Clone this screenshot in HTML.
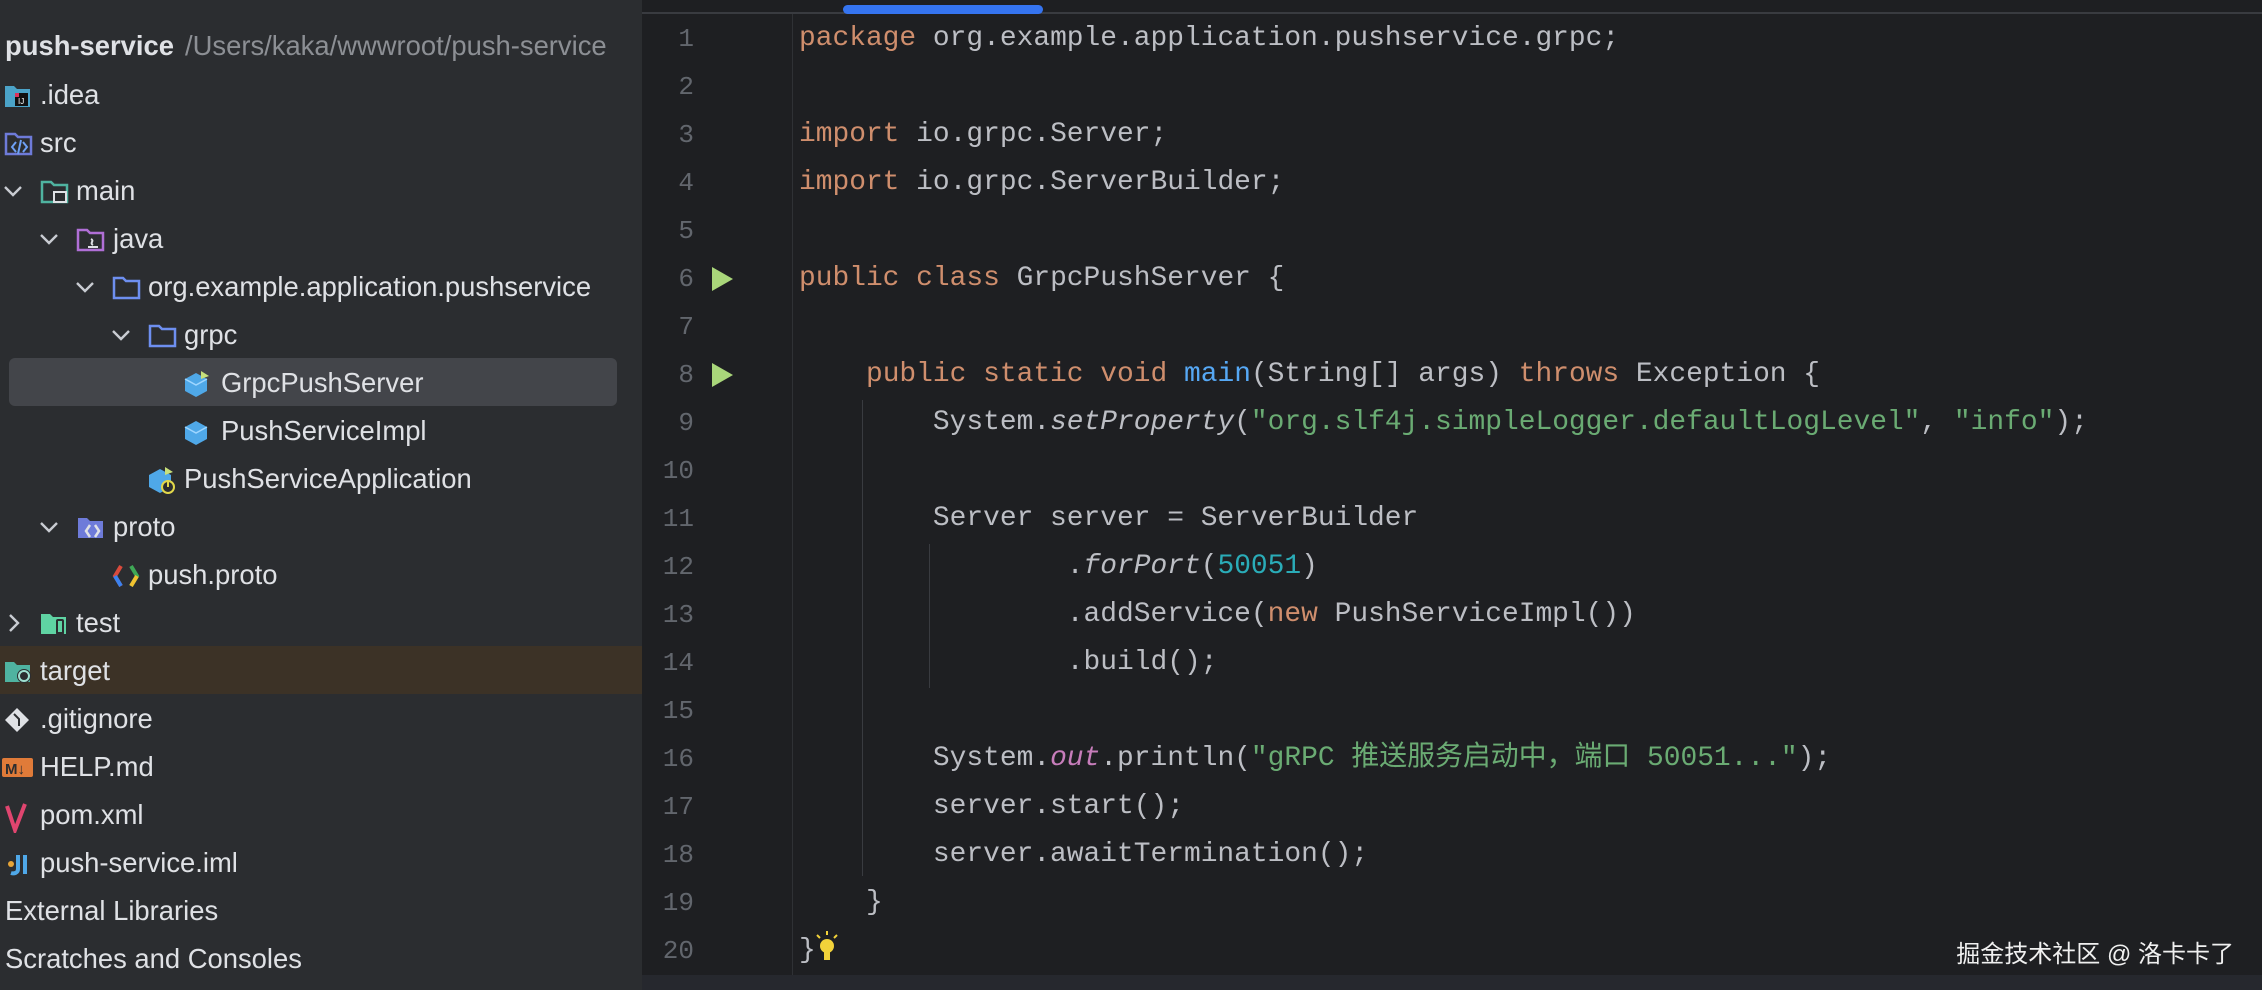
<!DOCTYPE html>
<html><head><meta charset="utf-8"><style>
*{margin:0;padding:0;box-sizing:border-box}
body{width:2262px;height:990px;overflow:hidden;background:#1e1f22;position:relative;font-family:"Liberation Sans","Noto Sans CJK SC",sans-serif}
#side{position:absolute;left:0;top:0;width:642px;height:990px;background:#2b2d30}
.row{position:absolute;left:0;height:48px;width:642px;color:#dfe1e5;font-size:27.4px;line-height:48px;white-space:nowrap}
.row .t{position:absolute;top:0}
.row svg{position:absolute;top:12px}
.row svg.cv{top:16px}
#ed{position:absolute;left:642px;top:0;right:0;bottom:0;background:#1e1f22}
.ln{position:absolute;left:642px;width:52px;text-align:right;color:#62666d;font-family:"Liberation Mono",monospace;font-size:26px;height:48px;line-height:48px}
.cl{position:absolute;left:799px;height:48px;line-height:48px;font-family:"Liberation Mono","Noto Sans CJK SC",monospace;font-size:27.9px;color:#bcbec4;white-space:pre}
.k{color:#cf8e6d}.s{color:#6aab73}.n{color:#2aacb8}.f{color:#56a8f5}.i{font-style:italic}.o{color:#c77dbb;font-style:italic}
.guide{position:absolute;width:1px;background:#393b40}
.run{position:absolute;left:712px;width:0;height:0;border-top:12px solid transparent;border-bottom:12px solid transparent;border-left:21px solid #a9d67a}
</style></head><body>
<div id="side">
<div class="row" style="top:22px"><span class="t" style="left:5px;font-weight:bold">push-service</span><span class="t" style="left:185px;color:#8c8f94">/Users/kaka/wwwroot/push-service</span></div>

<div class="row" style="top:71px"><svg width="28" height="26" style="left:4px"><path d="M1 3h9l3 3h13v18H1z" fill="#4ba3c8"/><rect x="11" y="10" width="13" height="13" fill="#111"/><rect x="11" y="10" width="4" height="4" fill="#e0325b"/><text x="14" y="21" fill="#fff" font-size="8" font-family="Liberation Sans">IJ</text></svg><span class="t" style="left:40px">.idea</span></div>

<div class="row" style="top:119px"><svg width="30" height="26" style="left:4px"><path d="M2 3h9l3 3h13v17H2z" fill="none" stroke="#6e7bd9" stroke-width="2.5"/><path d="M12 11l-4 5 4 5M19 11l4 5-4 5M17 9l-3 14" stroke="#6ea0f5" stroke-width="2" fill="none"/></svg><span class="t" style="left:40px">src</span></div>

<div class="row" style="top:167px"><svg class="cv" width="20" height="16" style="left:3px"><path d="M2 4l8 8 8-8" stroke="#c9ccd2" stroke-width="2.4" fill="none"/></svg><svg width="30" height="26" style="left:40px"><path d="M2 3h9l3 3h13v17H2z" fill="none" stroke="#4fb3a0" stroke-width="2.5"/><rect x="14" y="13" width="12" height="10" fill="#2b2d30" stroke="#dfe1e5" stroke-width="2"/></svg><span class="t" style="left:76px">main</span></div>

<div class="row" style="top:215px"><svg class="cv" width="20" height="16" style="left:39px"><path d="M2 4l8 8 8-8" stroke="#c9ccd2" stroke-width="2.4" fill="none"/></svg><svg width="30" height="26" style="left:76px"><path d="M2 3h9l3 3h13v17H2z" fill="none" stroke="#b06fd6" stroke-width="2.5"/><path d="M15 12c4 2-2 4 2 6M12 20h10" stroke="#dfe1e5" stroke-width="2" fill="none"/></svg><span class="t" style="left:113px">java</span></div>

<div class="row" style="top:263px"><svg class="cv" width="20" height="16" style="left:75px"><path d="M2 4l8 8 8-8" stroke="#c9ccd2" stroke-width="2.4" fill="none"/></svg><svg width="30" height="26" style="left:112px"><path d="M2 3h9l3 3h13v17H2z" fill="none" stroke="#6e8ff0" stroke-width="2.5"/></svg><span class="t" style="left:148px">org.example.application.pushservice</span></div>

<div class="row" style="top:311px"><svg class="cv" width="20" height="16" style="left:111px"><path d="M2 4l8 8 8-8" stroke="#c9ccd2" stroke-width="2.4" fill="none"/></svg><svg width="30" height="26" style="left:148px"><path d="M2 3h9l3 3h13v17H2z" fill="none" stroke="#6e8ff0" stroke-width="2.5"/></svg><span class="t" style="left:184px">grpc</span></div>

<div style="position:absolute;left:9px;top:358px;width:608px;height:48px;background:#43454a;border-radius:6px"></div>
<div class="row" style="top:359px"><svg width="28" height="26" style="left:184px"><path d="M12 2l11 6v12l-11 6-11-6V8z" fill="#4fa8e8"/><path d="M1 8l11 6 11-6" fill="none" stroke="#9fd6ff" stroke-width="1.5"/><path d="M17 0l8 5-8 3z" fill="#c8e07a"/></svg><span class="t" style="left:221px">GrpcPushServer</span></div>

<div class="row" style="top:407px"><svg width="28" height="26" style="left:184px"><path d="M12 2l11 6v12l-11 6-11-6V8z" fill="#4fa8e8"/><path d="M1 8l11 6 11-6" fill="none" stroke="#9fd6ff" stroke-width="1.5"/></svg><span class="t" style="left:221px">PushServiceImpl</span></div>

<div class="row" style="top:455px"><svg width="30" height="28" style="left:148px"><path d="M12 2l11 6v12l-11 6-11-6V8z" fill="#4fa8e8"/><path d="M17 0l8 5-8 3z" fill="#c8e07a"/><circle cx="20" cy="20" r="6" fill="#2b2d30" stroke="#e2d84a" stroke-width="2"/><path d="M20 13v7" stroke="#e2d84a" stroke-width="2"/></svg><span class="t" style="left:184px">PushServiceApplication</span></div>

<div class="row" style="top:503px"><svg class="cv" width="20" height="16" style="left:39px"><path d="M2 4l8 8 8-8" stroke="#c9ccd2" stroke-width="2.4" fill="none"/></svg><svg width="30" height="26" style="left:76px"><path d="M2 3h9l3 3h13v17H2z" fill="#6e7bd9"/><path d="M14 10l-4 6 4 6M19 10l4 6-4 6" stroke="#dfe1e5" stroke-width="2.5" fill="none"/></svg><span class="t" style="left:113px">proto</span></div>

<div class="row" style="top:551px"><svg width="30" height="26" style="left:112px"><path d="M9 3L3 13l6 10" stroke="#d94a3c" stroke-width="4" fill="none"/><path d="M3 13l6 10" stroke="#3b82f0" stroke-width="4"/><path d="M19 3l6 10-6 10" stroke="#3fa856" stroke-width="4" fill="none"/><path d="M25 13l-6 10" stroke="#f2c230" stroke-width="4"/></svg><span class="t" style="left:148px">push.proto</span></div>

<div class="row" style="top:599px"><svg class="cv" width="16" height="20" style="left:6px;top:14px"><path d="M4 2l8 8-8 8" stroke="#c9ccd2" stroke-width="2.4" fill="none"/></svg><svg width="30" height="26" style="left:40px"><path d="M1 3h9l3 3h13v17H1z" fill="#5fd3a3"/><rect x="16" y="8" width="8" height="16" rx="2" fill="#2b2d30"/><rect x="18" y="10" width="4" height="11" fill="#5fd3a3"/></svg><span class="t" style="left:76px">test</span></div>

<div style="position:absolute;left:0;top:646px;width:642px;height:48px;background:#3c3226"></div>
<div class="row" style="top:647px"><svg width="30" height="26" style="left:4px"><path d="M1 3h9l3 3h13v17H1z" fill="#4fb3a0"/><circle cx="20" cy="17" r="7" fill="#2b2d30"/><circle cx="20" cy="17" r="5" fill="none" stroke="#9ee0d0" stroke-width="2"/></svg><span class="t" style="left:40px">target</span></div>

<div class="row" style="top:695px"><svg width="30" height="28" style="left:4px"><path d="M13 1l12 12-12 12L1 13z" fill="#dfe1e5"/><path d="M10 7l5 5v7" stroke="#2b2d30" stroke-width="2" fill="none"/></svg><span class="t" style="left:40px">.gitignore</span></div>

<div class="row" style="top:743px"><svg width="32" height="26" style="left:2px"><rect x="0" y="3" width="31" height="19" rx="2" fill="#e07b39"/><text x="3" y="19" font-size="15" font-weight="bold" fill="#2b2d30" font-family="Liberation Sans">M↓</text></svg><span class="t" style="left:40px">HELP.md</span></div>

<div class="row" style="top:791px"><svg width="30" height="30" style="left:4px"><path d="M3 3l8 24 10-26" stroke="#e0456f" stroke-width="4" fill="none"/></svg><span class="t" style="left:40px">pom.xml</span></div>

<div class="row" style="top:839px"><svg width="30" height="26" style="left:6px"><circle cx="5" cy="13" r="3" fill="#e6a437"/><path d="M12 4v14c0 4-4 5-7 4" stroke="#4fa8e8" stroke-width="4" fill="none"/><rect x="17" y="4" width="4" height="19" fill="#4fa8e8"/></svg><span class="t" style="left:40px">push-service.iml</span></div>

<div class="row" style="top:887px"><span class="t" style="left:5px">External Libraries</span></div>
<div class="row" style="top:935px"><span class="t" style="left:5px">Scratches and Consoles</span></div>
</div>

<div id="ed"></div>
<div style="position:absolute;left:642px;right:0;top:12px;height:2px;background:#393b40"></div>
<div style="position:absolute;left:843px;top:5px;width:200px;height:9px;background:#3574f0;border-radius:5px"></div>
<div style="position:absolute;left:792px;top:14px;width:1px;height:976px;background:#2f3135"></div>
<div style="position:absolute;left:642px;right:0;top:975px;height:15px;background:#26282e"></div>

<div class="ln" style="top:15px">1</div><div class="ln" style="top:63px">2</div><div class="ln" style="top:111px">3</div><div class="ln" style="top:159px">4</div><div class="ln" style="top:207px">5</div><div class="ln" style="top:255px">6</div><div class="ln" style="top:303px">7</div><div class="ln" style="top:351px">8</div><div class="ln" style="top:399px">9</div><div class="ln" style="top:447px">10</div><div class="ln" style="top:495px">11</div><div class="ln" style="top:543px">12</div><div class="ln" style="top:591px">13</div><div class="ln" style="top:639px">14</div><div class="ln" style="top:687px">15</div><div class="ln" style="top:735px">16</div><div class="ln" style="top:783px">17</div><div class="ln" style="top:831px">18</div><div class="ln" style="top:879px">19</div><div class="ln" style="top:927px">20</div>

<div class="run" style="top:267px"></div>
<div class="run" style="top:363px"></div>

<div class="guide" style="left:862px;top:400px;height:476px"></div>
<div class="guide" style="left:929px;top:544px;height:144px"></div>

<div class="cl" style="top:15px"><span class="k">package</span> org.example.application.pushservice.grpc;</div>
<div class="cl" style="top:111px"><span class="k">import</span> io.grpc.Server;</div>
<div class="cl" style="top:159px"><span class="k">import</span> io.grpc.ServerBuilder;</div>
<div class="cl" style="top:255px"><span class="k">public class</span> GrpcPushServer {</div>
<div class="cl" style="top:351px">    <span class="k">public static void</span> <span class="f">main</span>(String[] args) <span class="k">throws</span> Exception {</div>
<div class="cl" style="top:399px">        System.<span class="i">setProperty</span>(<span class="s">"org.slf4j.simpleLogger.defaultLogLevel"</span>, <span class="s">"info"</span>);</div>
<div class="cl" style="top:495px">        Server server = ServerBuilder</div>
<div class="cl" style="top:543px">                .<span class="i">forPort</span>(<span class="n">50051</span>)</div>
<div class="cl" style="top:591px">                .addService(<span class="k">new</span> PushServiceImpl())</div>
<div class="cl" style="top:639px">                .build();</div>
<div class="cl" style="top:735px">        System.<span class="o">out</span>.println(<span class="s">"gRPC 推送服务启动中，端口 50051..."</span>);</div>
<div class="cl" style="top:783px">        server.start();</div>
<div class="cl" style="top:831px">        server.awaitTermination();</div>
<div class="cl" style="top:879px">    }</div>
<div class="cl" style="top:927px">}</div>
<svg style="position:absolute;left:814px;top:930px" width="26" height="34"><path d="M13 1v4M3 5l3 3M23 5l-3 3" stroke="#f2d23a" stroke-width="2"/><circle cx="13" cy="16" r="7" fill="#f2d23a"/><rect x="10" y="22" width="6" height="8" fill="#f2d23a"/></svg>

<div style="position:absolute;right:28px;top:934px;color:#f0f0f0;font-size:24px;font-family:'Liberation Sans','Noto Sans CJK SC',sans-serif">掘金技术社区 @ 洛卡卡了</div>
</body></html>
